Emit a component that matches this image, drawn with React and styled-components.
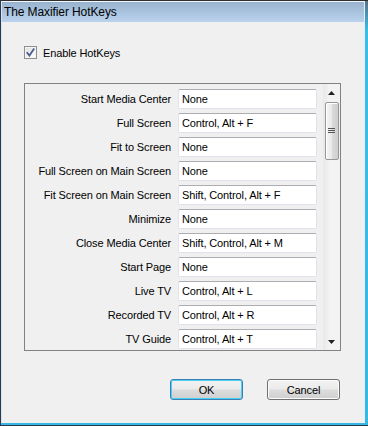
import React from "react";
import styled, { createGlobalStyle } from "styled-components";

const Global = createGlobalStyle`
  html, body { margin: 0; padding: 0; background: #2b2b2b; }
  body { width: 368px; height: 426px; overflow: hidden; }
  * { box-sizing: border-box; }
`;

const Frame = styled.div`
  width: 368px;
  height: 426px;
  background: linear-gradient(to bottom, #5a6f86 0px, #38bfe9 30px, #35b8e6 100%);
  border-top: 1px solid #2e2e2e;
  border-left: 1px solid #2a3a4e;
  border-bottom: 1px solid #2a3a4e;
  padding: 0 3px 2px 0;
  display: flex;
  font-family: "Liberation Sans", Arial, sans-serif;
`;

const Client = styled.div`
  flex: 1;
  display: flex;
  flex-direction: column;
  border-top: 1px solid #f4f7fb;
  border-left: 1px solid #dbe4ee;
  border-right: 1px solid #e8eef5;
  background: #f0f0f0;
`;

const TitleBar = styled.div`
  height: 20px;
  background: linear-gradient(to bottom, #99b3cf 0%, #a9c3de 50%, #bad2ec 100%);
  display: flex;
  align-items: center;
  padding-left: 2px;
  font-size: 12px;
  letter-spacing: -0.1px;
  color: #000;
`;

const Body = styled.div`
  flex: 1;
  display: flex;
  flex-direction: column;
  padding: 24px 23px 0 22px;
  font-size: 11px;
  letter-spacing: -0.12px;
  color: #000;
`;

const CheckRow = styled.label`
  display: flex;
  align-items: center;
  gap: 6px;
  height: 13px;
`;

const CheckBox = styled.span`
  width: 13px;
  height: 13px;
  border: 1px solid #8e8f8f;
  background: linear-gradient(135deg, #dcdcdc 0%, #f4f4f4 60%, #ffffff 100%);
  box-shadow: inset 0 0 0 1px #f4f4f4;
  display: flex;
  align-items: center;
  justify-content: center;
`;

const Panel = styled.div`
  margin-top: 24px;
  width: 317px;
  height: 268px;
  border: 1px solid #828282;
  display: flex;
  overflow: hidden;
`;

const List = styled.div`
  flex: 1;
  padding-top: 5px;
  display: grid;
  grid-template-columns: 146px 139px;
  grid-auto-rows: 20px;
  column-gap: 7px;
  row-gap: 4px;
  align-content: start;
`;

const Label = styled.div`
  display: flex;
  align-items: center;
  justify-content: flex-end;
  white-space: nowrap;
`;

const Field = styled.div`
  height: 20px;
  background: #fff;
  border: 1px solid #e2e3ea;
  border-top-color: #abadb3;
  border-radius: 2px;
  display: flex;
  align-items: center;
  padding-left: 3px;
  white-space: nowrap;
`;

const ScrollBar = styled.div`
  width: 17px;
  display: flex;
  flex-direction: column;
  align-items: center;
  background: linear-gradient(to right, #e8e8e8, #f3f3f3 40%, #f3f3f3);
`;

const Arrow = styled.div`
  height: 17px;
  width: 17px;
  display: flex;
  align-items: center;
  justify-content: center;
`;

const Track = styled.div`
  flex: 1;
  width: 100%;
  display: flex;
  justify-content: center;
`;

const Thumb = styled.div`
  margin-top: 1px;
  width: 14px;
  height: 58px;
  border: 1px solid #979797;
  border-radius: 2px;
  background: linear-gradient(to right, #f4f4f4 0%, #eaeaea 45%, #d9d9d9 55%, #cfcfcf 100%);
  box-shadow: inset 1px 1px 0 #fff;
  display: flex;
  align-items: center;
  justify-content: center;
`;

const Footer = styled.div`
  margin-top: 28px;
  display: flex;
  justify-content: flex-end;
  gap: 24px;
  padding-right: 1px;
`;

const Button = styled.button`
  width: 73px;
  height: 21px;
  font-family: "Liberation Sans", Arial, sans-serif;
  font-size: 11px;
  letter-spacing: -0.1px;
  color: #000;
  border-radius: 3px;
  border: 1px solid ${(p) => (p.$default ? "#3c7fb1" : "#707070")};
  background: linear-gradient(to bottom, #f2f2f2 0%, #ebebeb 48%, #dddddd 52%, #cfcfcf 100%);
  box-shadow: inset 0 0 0 1px ${(p) => (p.$default ? "#48d0f8" : "#fcfcfc")};
  padding: 0;
  display: flex;
  align-items: center;
  justify-content: center;
`;

const rows = [
  ["Start Media Center", "None"],
  ["Full Screen", "Control, Alt + F"],
  ["Fit to Screen", "None"],
  ["Full Screen on Main Screen", "None"],
  ["Fit Screen on Main Screen", "Shift, Control, Alt + F"],
  ["Minimize", "None"],
  ["Close Media Center", "Shift, Control, Alt + M"],
  ["Start Page", "None"],
  ["Live TV", "Control, Alt + L"],
  ["Recorded TV", "Control, Alt + R"],
  ["TV Guide", "Control, Alt + T"],
];

export default function App() {
  return (
    <>
      <Global />
      <Frame>
        <Client>
          <TitleBar>The Maxifier HotKeys</TitleBar>
          <Body>
            <CheckRow>
              <CheckBox>
                <svg width="9" height="9" viewBox="0 0 9 9">
                  <path d="M0.8 4.2 L3.4 7.6 L8.2 0.6" fill="none" stroke="#4a5d8e" strokeWidth="1.8" />
                </svg>
              </CheckBox>
              <span>Enable HotKeys</span>
            </CheckRow>
            <Panel>
              <List>
                {rows.map(([l, v]) => (
                  <React.Fragment key={l}>
                    <Label>{l}</Label>
                    <Field>{v}</Field>
                  </React.Fragment>
                ))}
              </List>
              <ScrollBar>
                <Arrow>
                  <svg width="7" height="4" viewBox="0 0 7 4">
                    <path d="M0 4 L3.5 0 L7 4 Z" fill="#222" />
                  </svg>
                </Arrow>
                <Track>
                  <Thumb>
                    <svg width="7" height="6" viewBox="0 0 7 6">
                      <path d="M0 0.5 H7 M0 2.5 H7 M0 4.5 H7" stroke="#555" strokeWidth="1" />
                    </svg>
                  </Thumb>
                </Track>
                <Arrow>
                  <svg width="7" height="4" viewBox="0 0 7 4">
                    <path d="M0 0 L7 0 L3.5 4 Z" fill="#222" />
                  </svg>
                </Arrow>
              </ScrollBar>
            </Panel>
            <Footer>
              <Button $default>OK</Button>
              <Button>Cancel</Button>
            </Footer>
          </Body>
        </Client>
      </Frame>
    </>
  );
}
